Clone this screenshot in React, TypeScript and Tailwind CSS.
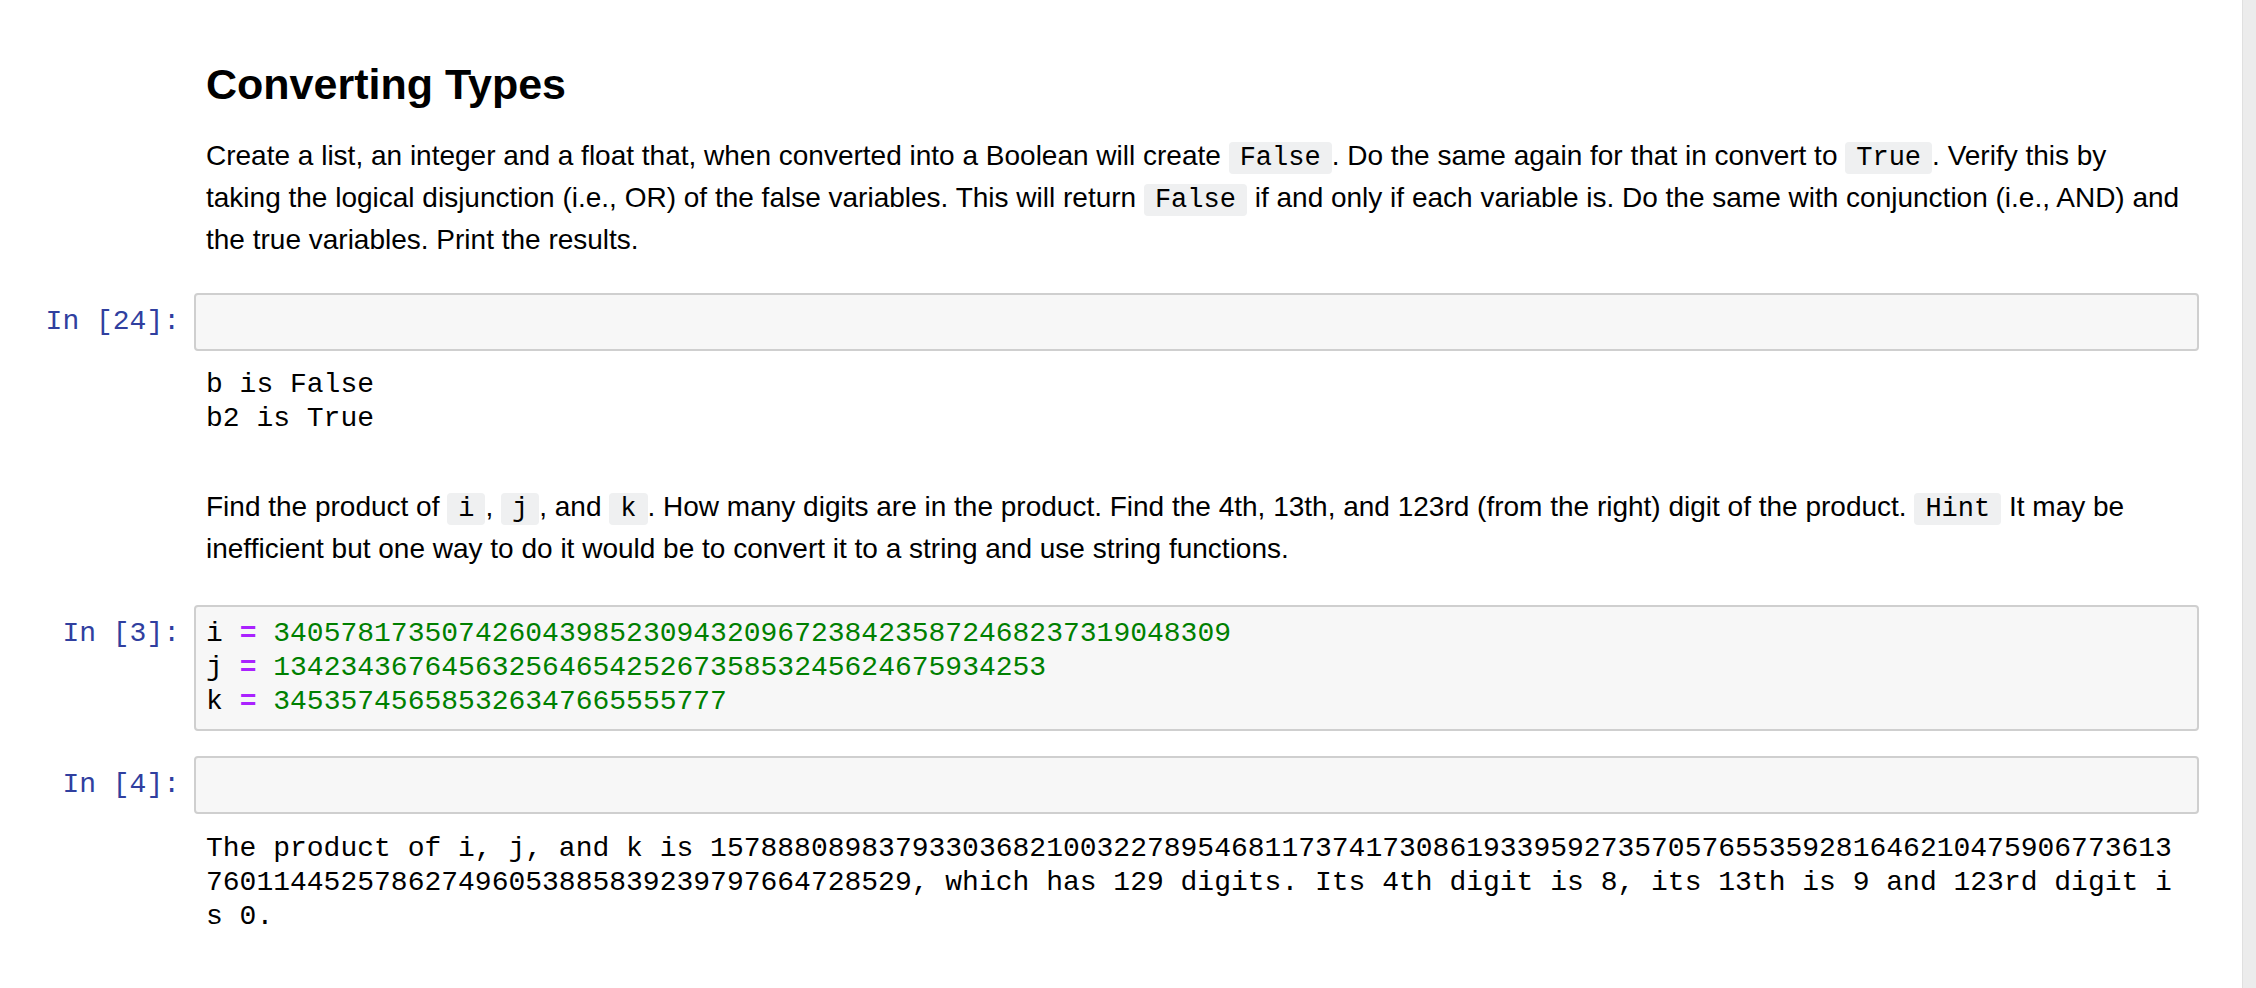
const mono = "font-['Liberation_Mono',monospace]";
const sans = "font-['Liberation_Sans',Arial,sans-serif]";

function Code({ children }: { children: string }) {
  return (
    <code className={`${mono} text-[27px] bg-[#eff0f1] rounded-[4px] px-[11px] py-[1px]`}>
      {children}
    </code>
  );
}

function Prompt({ n }: { n?: string }) {
  return (
    <div className={`w-[194px] shrink-0 pr-[14px] text-right ${mono} text-[28px] leading-[34px] text-[#303f9f] pt-[12px]`}>
      {n !== undefined ? `In [${n}]:` : ""}
    </div>
  );
}

// a code cell: prompt + grey input box
function CodeCell({ n, children, className = "" }: { n: string; children?: React.ReactNode; className?: string }) {
  return (
    <div className={`flex ${className}`}>
      <Prompt n={n} />
      <div className="flex-1 mr-[43px] border-2 border-[#cfcfcf] rounded-[4px] bg-[#f7f7f7] pt-[10px] pb-[10px] px-[10px]">
        <div className={`${mono} text-[28px] leading-[34px] min-h-[34px] whitespace-pre`}>{children}</div>
      </div>
    </div>
  );
}

function Output({ lines, className = "" }: { lines: string[]; className?: string }) {
  return (
    <div className={`flex ${className}`}>
      <div className="w-[194px] shrink-0" />
      <div className={`flex-1 mr-[43px] pl-[12px] ${mono} text-[28px] leading-[34px] text-black whitespace-pre`}>
        {lines.map((l, i) => (
          <div key={i}>{l}</div>
        ))}
      </div>
    </div>
  );
}

function Markdown({ children, className = "" }: { children: React.ReactNode; className?: string }) {
  return (
    <div className={`flex ${className}`}>
      <div className="w-[194px] shrink-0" />
      <div className={`flex-1 mr-[43px] px-[12px] ${sans} text-black`}>{children}</div>
    </div>
  );
}

function CodeLine({ name, value }: { name: string; value: string }) {
  return (
    <div>
      <span className="text-black">{name}</span> <span className="text-[#aa22ff] font-bold">=</span>{" "}
      <span className="text-[#008000]">{value}</span>
    </div>
  );
}

export default function App() {
  return (
    <div className="flex min-h-[988px] bg-white">
      <div className="flex-1 pt-[58px]">
        <Markdown>
          <h2 className="text-[43px] leading-[52px] font-bold">Converting Types</h2>
          <p className="text-[28px] leading-[40px] mt-[26px]">
            Create a list, an integer and a float that, when converted into a Boolean will create <Code>False</Code>. Do
            the same again for that in convert to <Code>True</Code>. Verify this by
            <br />
            taking the logical disjunction (i.e., OR) of the false variables. This will return <Code>False</Code> if and
            only if each variable is. Do the same with conjunction (i.e., AND) and
            <br />
            the true variables. Print the results.
          </p>
        </Markdown>

        <CodeCell n="24" className="mt-[33px]" />
        <Output className="mt-[17px]" lines={["b is False", "b2 is True"]} />

        <Markdown className="mt-[51px]">
          <p className="text-[28px] leading-[40px]">
            Find the product of <Code>i</Code>, <Code>j</Code>, and <Code>k</Code>. How many digits are in the product.
            Find the 4th, 13th, and 123rd (from the right) digit of the product. <Code>Hint</Code> It may be
            <br />
            inefficient but one way to do it would be to convert it to a string and use string functions.
          </p>
        </Markdown>

        <CodeCell n="3" className="mt-[36px]">
          <CodeLine name="i" value="340578173507426043985230943209672384235872468237319048309" />
          <CodeLine name="j" value="1342343676456325646542526735853245624675934253" />
          <CodeLine name="k" value="345357456585326347665555777" />
        </CodeCell>

        <CodeCell n="4" className="mt-[25px]" />
        <Output
          className="mt-[18px]"
          lines={[
            "The product of i, j, and k is 157888089837933036821003227895468117374173086193395927357057655359281646210475906773613",
            "760114452578627496053885839239797664728529, which has 129 digits. Its 4th digit is 8, its 13th is 9 and 123rd digit i",
            "s 0.",
          ]}
        />
      </div>
      <div className="w-[14px] shrink-0 bg-[#ececec] border-l border-[#e0e0e0]" />
    </div>
  );
}
